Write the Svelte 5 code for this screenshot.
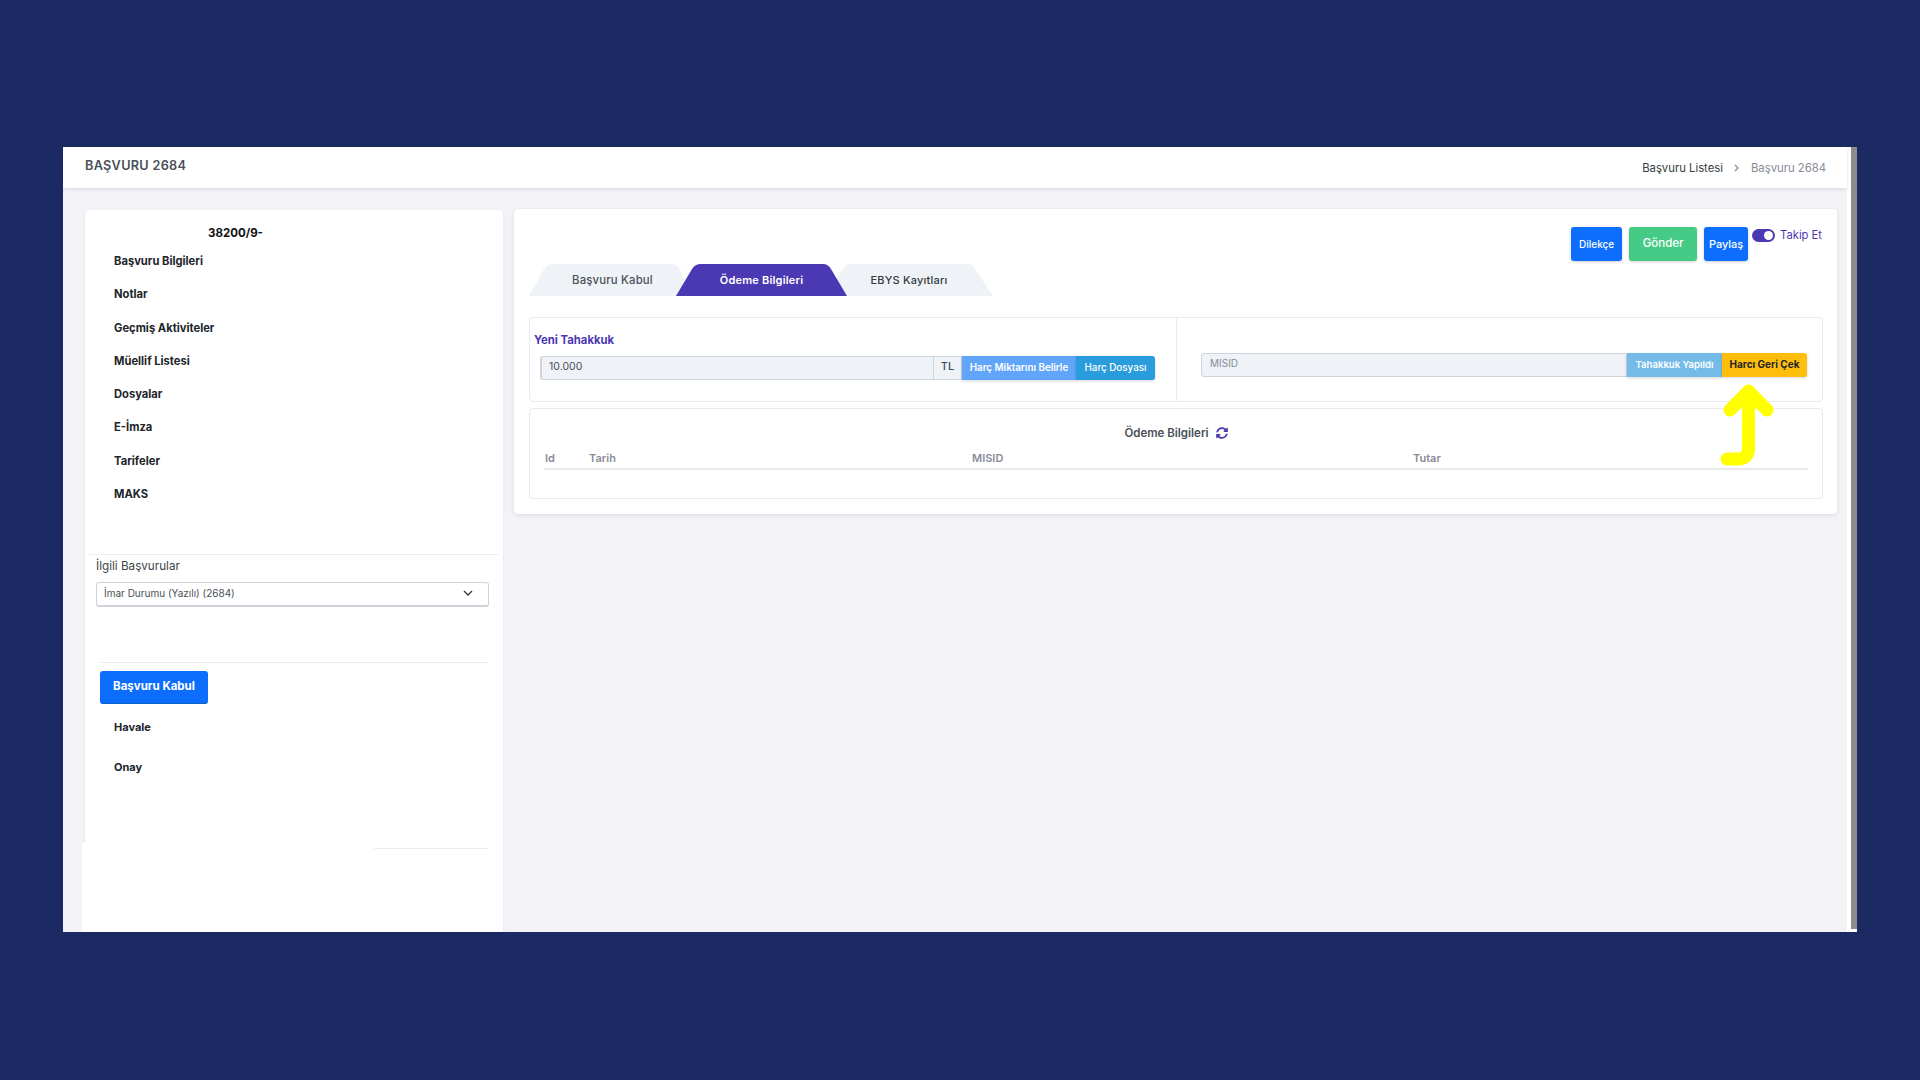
<script>
  const menu = ["Başvuru Bilgileri", "Notlar", "Geçmiş Aktiviteler", "Müellif Listesi", "Dosyalar", "E-İmza", "Tarifeler", "MAKS"];
  const tabs = [
    { label: "Başvuru Kabul", cls: "first" },
    { label: "Ödeme Bilgileri", cls: "active" },
    { label: "EBYS Kayıtları", cls: "last" },
  ];
  const columns = ["Id", "Tarih", "MISID", "Tutar"];
</script>

<div class="slide">
  <div class="screen">
    <div class="page">
      <header class="topbar">
        <h1>BAŞVURU 2684</h1>
        <nav class="crumbs">
          <span>Başvuru Listesi</span>
          <svg width="6" height="8" viewBox="0 0 6 8"><path d="M1 1l3 3-3 3" fill="none" stroke="#7c8698" stroke-width="1.2" /></svg>
          <span class="muted">Başvuru 2684</span>
        </nav>
      </header>

      <div class="content">
        <aside class="sidebar">
          <div class="file-no">38200/9-</div>
          <ul class="menu">
            {#each menu as item}
              <li>{item}</li>
            {/each}
          </ul>
          <hr class="line first-line" />
          <div class="related">
            <label for="related-select">İlgili Başvurular</label>
            <div class="select" id="related-select">
              <span>İmar Durumu (Yazılı) (2684)</span>
              <svg width="10" height="6" viewBox="0 0 10 6"><path d="M1 1l4 4 4-4" fill="none" stroke="#343a40" stroke-width="1.3" /></svg>
            </div>
          </div>
          <hr class="line second-line" />
          <button class="stage-btn">Başvuru Kabul</button>
          <div class="stage stage-one">Havale</div>
          <div class="stage stage-two">Onay</div>
          <div class="side-foot"><hr class="foot-line" /></div>
        </aside>

        <main class="card">
          <div class="actions">
            <button class="btn blue small">Dilekçe</button>
            <button class="btn green">Gönder</button>
            <button class="btn blue share">Paylaş</button>
            <div class="follow">
              <span class="toggle"><span class="knob"></span></span>
              <span>Takip Et</span>
            </div>
          </div>

          <div class="tabs">
            {#each tabs as tab}
              <div class="tab {tab.cls}">{tab.label}</div>
            {/each}
          </div>

          <section class="panel accrual">
            <div class="accrual-left">
              <h2>Yeni Tahakkuk</h2>
              <div class="group">
                <div class="field">10.000</div>
                <div class="addon">TL</div>
                <button class="seg sky">Harç Miktarını Belirle</button>
                <button class="seg teal">Harç Dosyası</button>
              </div>
            </div>
            <div class="accrual-right">
              <div class="group">
                <div class="field placeholder">MISID</div>
                <button class="seg pale">Tahakkuk Yapıldı</button>
                <button class="seg amber">Harcı Geri Çek</button>
              </div>
            </div>
          </section>

          <section class="panel payments">
            <h3>
              Ödeme Bilgileri
              <svg width="12" height="12" viewBox="0 0 512 512"><path fill="#4b38b3" d="M370.72 133.28C339.458 104.008 298.888 87.962 255.848 88c-77.458.068-144.328 53.178-162.791 126.85-1.344 5.363-6.122 9.15-11.651 9.15H24.103c-7.498 0-13.194-6.807-11.807-14.176C33.933 94.924 134.813 8 256 8c66.448 0 126.791 26.136 171.315 68.685L463.03 40.97C478.149 25.851 504 36.559 504 57.941V192c0 13.255-10.745 24-24 24H345.941c-21.382 0-32.09-25.851-16.971-40.971l41.75-41.749zM32 296h134.059c21.382 0 32.09 25.851 16.971 40.971l-41.75 41.75c31.262 29.273 71.835 45.319 114.876 45.28 77.418-.07 144.315-53.144 162.787-126.849 1.344-5.363 6.122-9.15 11.651-9.15h57.304c7.498 0 13.194 6.807 11.807 14.176C478.067 417.076 377.187 504 256 504c-66.448 0-126.791-26.136-171.315-68.685L48.97 471.03C33.851 486.149 8 475.441 8 454.059V320c0-13.255 10.745-24 24-24z" /></svg>
            </h3>
            <div class="thead">
              {#each columns as col}
                <span>{col}</span>
              {/each}
            </div>
          </section>
        </main>
      </div>
    </div>
    <div class="scroll-gap"></div>
    <div class="scrollbar"></div>

    <!-- yellow annotation arrow drawn over the screenshot -->
    <svg class="arrow" width="70" height="90" viewBox="0 0 70 90">
      <path d="M18 34L36.500 15L55 34M36.500 15V72Q36.500 83 26 83H15" fill="none" stroke="#ffff00" stroke-width="13" stroke-linecap="round" stroke-linejoin="round" />
    </svg>
  </div>
</div>

<style>
  :global(body) {
    background: #1b2a63;
  }
  * {
    box-sizing: border-box;
  }
  .slide {
    height: 1080px;
    padding: 147px 63px 0;
    background: #1b2a63;
    font-family: Inter, "Liberation Sans", sans-serif;
    overflow: hidden;
  }
  .screen {
    position: relative;
    display: flex;
    width: 1794px;
    height: 785px;
    background: #fff;
  }
  .page {
    width: 1784px;
    background: #f2f2f7;
  }
  .scroll-gap {
    width: 4px;
  }
  .scrollbar {
    width: 6px;
    height: 782px;
    background: #8c8c8c;
  }
  .topbar {
    display: flex;
    align-items: center;
    justify-content: space-between;
    height: 41px;
    padding: 0 21px 0 22px;
    background: #fff;
    box-shadow: 0 1px 4px rgba(20, 20, 50, 0.12);
    position: relative;
  }
  h1 {
    margin: 0 0 4px;
    font-size: 12.700px;
    font-weight: 600;
    letter-spacing: 0.3px;
    color: #495057;
  }
  .crumbs {
    display: flex;
    align-items: center;
    gap: 11px;
    font-size: 11.300px;
    color: #343a40;
  }
  .muted {
    color: #878a99;
  }
  .content {
    display: flex;
    align-items: flex-start;
    gap: 11px;
    padding: 21px 0 0 22px;
  }
  .sidebar {
    display: flex;
    flex-direction: column;
    width: 418px;
    height: 722px;
    margin-top: 1px;
    background: #fff;
    border-radius: 4px 4px 0 0;
    box-shadow: 0 1px 3px rgba(30, 30, 60, 0.06);
  }
  .file-no {
    margin: 15px 0 0 123px;
    font-size: 11.500px;
    font-weight: 700;
    line-height: 16px;
    color: #111;
  }
  .menu {
    margin: 4px 0 0;
    padding: 0 0 0 29px;
    list-style: none;
  }
  .menu li {
    height: 33.300px;
    line-height: 33.300px;
    font-size: 11.200px;
    font-weight: 700;
    color: #212529;
  }
  .line {
    margin: 0;
    border: 0;
    border-top: 1px solid #eeeef2;
  }
  .first-line {
    margin: 43px 4px 0;
  }
  .related {
    padding: 0 14px 0 11px;
  }
  .related label {
    display: block;
    margin-top: 3px;
    font-size: 11.700px;
    line-height: 16px;
    color: #3d444b;
  }
  .select {
    display: flex;
    align-items: center;
    justify-content: space-between;
    height: 25px;
    margin-top: 8px;
    padding: 0 15px 2px 7px;
    border: 1px solid #ced4da;
    border-bottom-width: 2px;
    border-radius: 3px;
    font-size: 10px;
    color: #495057;
  }
  .second-line {
    margin: 55px 14px 0 15px;
  }
  .stage-btn {
    width: 108px;
    height: 33px;
    margin: 8px 0 0 15px;
    padding: 0 0 3px;
    border: 0;
    border-bottom: 1px solid #0a63c9;
    border-radius: 3px;
    background: #0d6efd;
    font: 700 11.500px Inter, "Liberation Sans", sans-serif;
    color: #fff;
  }
  .stage {
    margin-left: 29px;
    font-size: 11px;
    font-weight: 700;
    line-height: 16px;
    color: #212529;
  }
  .stage-one {
    margin-top: 15px;
  }
  .stage-two {
    margin-top: 24px;
  }
  .side-foot {
    flex: 1;
    margin-top: 68px;
    margin-left: -3px;
    padding-top: 5px;
    background: #fff;
  }
  .foot-line {
    width: 115px;
    margin: 0 14px 0 auto;
    border: 0;
    border-top: 1px solid #eeeef2;
  }
  .card {
    width: 1323px;
    height: 305px;
    padding: 18px 14px 15px 15px;
    background: #fff;
    border-radius: 4px;
    box-shadow: 0 1px 4px rgba(30, 30, 60, 0.1);
  }
  .actions {
    display: flex;
    justify-content: flex-end;
    gap: 7px;
    height: 34px;
    padding-right: 1px;
  }
  .btn {
    height: 34px;
    border: 0;
    border-radius: 3px;
    padding: 0;
    font: 500 11.500px Inter, "Liberation Sans", sans-serif;
    color: #fff;
    box-shadow: 0 1px 3px rgba(30, 30, 60, 0.2);
  }
  .blue {
    background: #0d6efd;
  }
  .small {
    width: 51px;
    font-size: 10px;
  }
  .green {
    width: 68px;
    background: #45cb85;
    padding-bottom: 2px;
  }
  .share {
    width: 44px;
    font-size: 11px;
  }
  .follow {
    display: flex;
    align-items: flex-start;
    gap: 5px;
    margin-left: -3px;
    font-size: 11.200px;
    line-height: 16px;
    color: #4b38b3;
  }
  .toggle {
    display: flex;
    align-items: center;
    justify-content: flex-end;
    width: 23px;
    height: 13px;
    margin-top: 2px;
    padding-right: 2px;
    border-radius: 7px;
    background: #4b38b3;
  }
  .knob {
    width: 9px;
    height: 9px;
    border-radius: 50%;
    background: #fff;
  }
  .tabs {
    display: flex;
    height: 32px;
    margin-top: 3px;
  }
  .tab {
    position: relative;
    display: flex;
    align-items: center;
    justify-content: center;
    height: 32px;
    background: #eff2f7;
    font-size: 11.300px;
    font-weight: 500;
    letter-spacing: 0.2px;
    color: #495057;
  }
  .tab.first {
    width: 160px;
    padding: 0 0 1px 7px;
    clip-path: path("M0 32L15 5Q18 0 24 0H142Q148 0 151 5L160 32Z");
  }
  .tab.active {
    z-index: 1;
    width: 171px;
    margin-left: -13px;
    padding-bottom: 1px;
    background: #4b38b3;
    color: #fff;
    font-size: 11px;
    font-weight: 600;
    clip-path: path("M0 32L16 5Q19 0 25 0H147Q152 0 155 5L171 32Z");
  }
  .tab.last {
    width: 166px;
    margin-left: -20px;
    padding: 0 2px 1px 0;
    color: #343a40;
    font-size: 11px;
    clip-path: path("M0 32L16 5Q19 0 25 0H140Q145 0 148 5L166 32Z");
  }
  .panel {
    border: 1px solid #e9e9ef;
    border-radius: 4px;
  }
  .accrual {
    display: grid;
    grid-template-columns: 647px 1fr;
    height: 85px;
    margin-top: 21px;
  }
  .accrual-left {
    padding: 14px 0 0 4px;
    border-right: 1px solid #e9e9ef;
  }
  h2 {
    margin: 0;
    font-size: 11.300px;
    font-weight: 700;
    line-height: 16px;
    color: #4b38b3;
  }
  .group {
    display: flex;
    height: 24px;
  }
  .accrual-left .group {
    margin: 8px 0 0 6px;
    width: 615px;
  }
  .accrual-right {
    padding: 35px 15px 0 24px;
  }
  .field {
    flex: 1;
    padding: 0 0 2px 7px;
    border: 1px solid #ced4da;
    border-left-width: 2px;
    border-radius: 3px 0 0 3px;
    background: #eff2f7;
    font-size: 10.500px;
    line-height: 20px;
    color: #495057;
  }
  .placeholder {
    border-left-width: 1px;
    color: #878a99;
    font-size: 10px;
    line-height: 18px;
    padding-left: 8px;
  }
  .addon {
    width: 28px;
    padding-bottom: 3px;
    border: 1px solid #ced4da;
    border-left: 0;
    font-size: 11px;
    line-height: 19px;
    font-weight: 500;
    text-align: center;
    color: #3a4a68;
    background: #eff2f7;
  }
  .seg {
    height: 24px;
    padding: 0 0 2px;
    border: 0;
    font: 600 9.800px Inter, "Liberation Sans", sans-serif;
    color: #fff;
    box-shadow: 0 1px 3px rgba(30, 30, 60, 0.18);
  }
  .sky {
    width: 114px;
    background: #60a5fa;
  }
  .teal {
    width: 79px;
    border-radius: 0 3px 3px 0;
    background: #299cdb;
    font-weight: 500;
  }
  .pale {
    width: 95px;
    font-size: 9.600px;
    background: #74bbe8;
  }
  .amber {
    width: 85px;
    padding-bottom: 3px;
    border-radius: 0 3px 3px 0;
    background: #ffbe0b;
    color: #212529;
    font-size: 10px;
    font-weight: 700;
  }
  .payments {
    height: 91px;
    margin-top: 6px;
    padding: 15px 14px 0 14px;
  }
  h3 {
    display: flex;
    align-items: center;
    justify-content: center;
    gap: 7px;
    margin: 0;
    font-size: 11.500px;
    font-weight: 600;
    line-height: 18px;
    color: #495057;
  }
  .thead {
    display: grid;
    grid-template-columns: 44px 383px 441px 1fr;
    height: 21px;
    margin-top: 7px;
    padding: 1px 0 0 1px;
    border-bottom: 2px solid #e9e9ec;
    font-size: 11px;
    font-weight: 600;
    line-height: 16px;
    color: #8b8b99;
  }
  .arrow {
    position: absolute;
    left: 1649px;
    top: 229px;
  }
</style>
